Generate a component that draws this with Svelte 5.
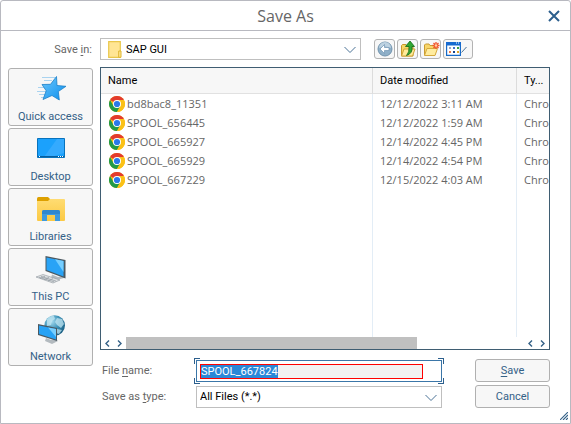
<script>
  import { onMount } from 'svelte';

  const places = ['Quick access', 'Desktop', 'Libraries', 'This PC', 'Network'];
  const files = [
    { name: 'bd8bac8_11351', date: '12/12/2022 3:11 AM', type: 'Chro' },
    { name: 'SPOOL_656445', date: '12/12/2022 1:59 AM', type: 'Chro' },
    { name: 'SPOOL_665927', date: '12/14/2022 4:45 PM', type: 'Chro' },
    { name: 'SPOOL_665929', date: '12/14/2022 4:54 PM', type: 'Chro' },
    { name: 'SPOOL_667229', date: '12/15/2022 4:03 AM', type: 'Chro' }
  ];
  let fileName = $state('SPOOL_667824');
  let field;

  onMount(() => {
    field.focus();
    field.select();
  });
</script>

{#snippet chevron()}
  <svg class="chevron" width="12" height="8" viewBox="0 0 12 8" aria-hidden="true">
    <path d="M.5 1 6 6.500 11.500 1" fill="none" stroke="#4a7396" stroke-width="1" />
  </svg>
{/snippet}

{#snippet angle(d)}
  <svg width="5" height="7" viewBox="0 0 5 7" aria-hidden="true">
    <path {d} fill="none" stroke="#346187" stroke-width="1.4" />
  </svg>
{/snippet}

{#snippet placeIcon(place)}
  {#if place === 'Quick access'}
    <svg width="32" height="32" viewBox="0 0 32 32" aria-hidden="true">
      <defs>
        <linearGradient id="star" x1="0" y1="0" x2="1" y2="1">
          <stop offset="0" stop-color="#6cc6fb" /><stop offset="1" stop-color="#0a8fee" />
        </linearGradient>
      </defs>
      <path d="M7 4.500h13M9 7.500h8M3 14.500h8M2 18.500h9M4 21.500h7M6 24.500h3" stroke="#a9d3f0" stroke-width="1" />
      <path d="M21.500 3.500 22 12.500l9 .8-7.700 5.200 1 8.500-7.300-4.500-9 4 3.200-8.700L7 11.500l8.500-.2z" fill="url(#star)" stroke="#1c7fc6" stroke-width=".8" />
    </svg>
  {:else if place === 'Desktop'}
    <svg width="32" height="32" viewBox="0 0 32 32" aria-hidden="true">
      <path d="M2.500 5.500h27v19h-27z" fill="#1ba1fc" stroke="#0873bd" />
      <path d="M29 6v14L16 24H9L22 6z" fill="#48b3ff" opacity=".55" />
      <path d="M3 23.500h26" stroke="#075e9d" />
      <path d="M4 23.500h1M23 23.500h1M25 23.500h1M27 23.500h1" stroke="#fff" />
    </svg>
  {:else if place === 'Libraries'}
    <svg width="32" height="32" viewBox="0 0 32 32" aria-hidden="true">
      <defs>
        <linearGradient id="lib" x1="0" y1="0" x2="0" y2="1">
          <stop offset="0" stop-color="#ffdc72" /><stop offset="1" stop-color="#fbc944" />
        </linearGradient>
      </defs>
      <path d="M2 5.500q0-1.500 1.500-1.500H13l2 2v4H2z" fill="#dda000" />
      <path d="M15 6h14q1 0 1 1v20q0 1-1 1H3q-1 0-1-1V8h11z" fill="url(#lib)" />
      <path d="M7 28V19q0-2 2-2h14q2 0 2 2v9h-5v-6h-8v6z" fill="#3e9ade" />
      <path d="M9 17h14q2 0 2 2v2H7v-2q0-2 2-2z" fill="#2f87cf" />
    </svg>
  {:else if place === 'This PC'}
    <svg width="32" height="32" viewBox="0 0 32 32" aria-hidden="true">
      <path d="M17 21.500l6 2.500 5-1 1 2-7 2-6-2z" fill="#b3babf" />
      <path d="M10.500 3 30.500 7v18.500L10.500 18z" fill="#4b5961" />
      <path d="M11.500 4.500 28.500 8v15.500L11.500 17z" fill="#29a3f6" />
      <path d="M28.500 8v11L20 6.300z" fill="#75ceff" />
      <path d="M1 24l7-2.500 17 5.500-7 3z" fill="#dfe2e4" stroke="#8d969c" stroke-width=".6" />
      <path d="M4 24.300l15 4.500M6 23.400l15 4.700M5 25.500l5-2.300M9 26.700l5-2.300M13 27.900l5-2.300" stroke="#909aa0" stroke-width=".7" />
    </svg>
  {:else}
    <svg width="32" height="32" viewBox="0 0 32 32" aria-hidden="true">
      <defs>
        <radialGradient id="globe" cx=".35" cy=".3" r=".8">
          <stop offset="0" stop-color="#a7dcf0" /><stop offset=".5" stop-color="#3d92b8" /><stop offset="1" stop-color="#155578" />
        </radialGradient>
      </defs>
      <circle cx="19.700" cy="12.500" r="10.300" fill="url(#globe)" />
      <path d="M12 6q4-4 7-3l1 3-3 2-1 4-4 1zM22 5l5 1 2 5-3 4-4-3-2-3zM22 16l5 1-3 4-3-1z" fill="#c2e6f1" opacity=".75" />
      <path d="M11 25l5 2 5-1 2 2-6 3-7-3z" fill="#b3babf" />
      <path d="M3 11l19 4v13L3 22z" fill="#4b5961" />
      <path d="M4 12.500 21 16v10.500L4 21z" fill="#27a2f5" />
      <path d="M21 16v8l-8-9.600z" fill="#78cfff" />
    </svg>
  {/if}
{/snippet}

<main class="dialog">
  <header>
    <h1>Save As</h1>
    <button class="close" aria-label="Close">
      <svg width="12" height="12" viewBox="0 0 12 12" aria-hidden="true">
        <path d="M1 1l10 10M11 1 1 11" stroke="#2c5f8d" stroke-width="2" />
      </svg>
    </button>
  </header>

  <div class="lookin">
    <label for="folder">Save <u>i</u>n:</label>
    <div class="combo folder">
      <svg class="dir" width="14" height="17" viewBox="0 0 14 17" aria-hidden="true">
        <path d="M.7.7h11.600v15.600H.7z" fill="#ffe594" stroke="#e9c74c" stroke-width="1.2" />
        <path d="M10.700 10h2.300v6.300h-2.300z" fill="#ffe594" stroke="#dfb62f" />
      </svg>
      <select id="folder"><option>SAP GUI</option></select>
      {@render chevron()}
    </div>
    <div class="tools">
      <button aria-label="Back">
        <svg width="18" height="18" viewBox="0 0 18 18" aria-hidden="true">
          <circle cx="9" cy="9" r="7" fill="#8eafc8" stroke="#7193ad" />
          <path d="M3 8a6 6 0 0 1 12 0q-6-3-12 0z" fill="#bdd2e1" />
          <path d="M4 9l4.500-4.500v3H13v3H8.500v3z" fill="#fff" stroke="#6e94b3" stroke-width=".7" />
        </svg>
      </button>
      <button aria-label="Up one level">
        <svg width="18" height="18" viewBox="0 0 18 18" aria-hidden="true">
          <path d="M2.500 16V5.500l1-1H7l1 1.500h6V16z" fill="#f7d565" stroke="#c6982b" />
          <path d="M2.500 16 5 9h11l-2.500 7z" fill="#ffeb99" stroke="#d0a437" />
          <path d="M7.500 15.500q3-3 2.500-9H6.500L11 1l4.500 5.500H13q1 7-5.500 9z" fill="#32a832" stroke="#126a16" stroke-width=".8" />
        </svg>
      </button>
      <button aria-label="Create new folder">
        <svg width="18" height="18" viewBox="0 0 18 18" aria-hidden="true">
          <path d="M2.500 15V5l1-1H7l1 1.500h5V15z" fill="#f8d66a" stroke="#c99b32" />
          <path d="M2.500 15.500 5 8.500h10.500L13 15.500z" fill="#ffec9f" stroke="#d5a93c" />
          <path d="M14 2v7M10.500 5.500h7M11.500 3l5 5M16.500 3l-5 5" stroke="#f1522a" stroke-width="1.3" />
          <circle cx="14" cy="5.500" r="1.300" fill="#ffd0a0" />
        </svg>
      </button>
      <button class="wide" aria-label="View menu">
        <svg width="26" height="18" viewBox="0 0 26 18" aria-hidden="true">
          <path d="M1.600 2.600h13.800v12.800H1.600z" fill="#fff" stroke="#176ac8" stroke-width="1.200" />
          <path d="M1 2h15v3.500H1z" fill="#176ad0" />
          <path d="M11 3h1M13 3h1" stroke="#fff" />
          <path d="M4 7h2v2H4z" fill="#9aa5c2" /><path d="M8 7h2v2H8z" fill="#4571c9" /><path d="M12 7h2v2h-2z" fill="#399d42" />
          <path d="M4 11h2v2H4z" fill="#f17a48" /><path d="M8 11h2v2H8z" fill="#15428c" /><path d="M12 11h2v2h-2z" fill="#e1a326" />
          <path d="M16.500 12.500 21.500 7" fill="none" stroke="#4a7396" />
        </svg>
      </button>
    </div>
  </div>

  <div class="middle">
    <nav aria-label="Places">
      {#each places as place}
        <button>{@render placeIcon(place)}<span>{place}</span></button>
      {/each}
    </nav>

    <div class="content">
      <section class="list" aria-label="Files">
        <table>
          <colgroup><col class="c-name" /><col class="c-date" /><col /></colgroup>
          <thead><tr><th>Name</th><th>Date modified</th><th>Ty...</th></tr></thead>
          <tbody>
            {#each files as file}
              <tr>
                <td>
                  <div class="file">
                    <svg width="16" height="16" viewBox="0 0 16 16" aria-hidden="true">
                      <circle cx="8" cy="8" r="8" fill="#fbc116" />
                      <path d="M8 8 1.070 4A8 8 0 0 1 14.930 4z" fill="#e33b2e" />
                      <path d="M1.070 4A8 8 0 0 0 8 16l3.460-6L8 8 4.540 10z" fill="#229a48" />
                      <path d="M8 4h6.930A8 8 0 0 1 8 16l3.460-6z" fill="#fbc116" />
                      <circle cx="8" cy="8" r="4" fill="#fff" />
                      <circle cx="8" cy="8" r="3.100" fill="#2a79ea" />
                    </svg>
                    <span>{file.name}</span>
                  </div>
                </td>
                <td>{file.date}</td>
                <td>{file.type}</td>
              </tr>
            {/each}
            <tr class="rest"><td></td><td></td><td></td></tr>
          </tbody>
        </table>
        <div class="scroll">
          <div class="arrows">
            {@render angle('M4 .5 1 3.500 4 6.500')}
            {@render angle('M1 .5 4 3.500 1 6.500')}
          </div>
          <div class="track"><div class="thumb"></div></div>
          <div class="arrows">
            {@render angle('M4 .5 1 3.500 4 6.500')}
            {@render angle('M1 .5 4 3.500 1 6.500')}
          </div>
        </div>
      </section>

      <form class="form" onsubmit={(e) => e.preventDefault()}>
        <label for="name">File <u>n</u>ame:</label>
        <div class="namebox">
          <input id="name" type="text" bind:this={field} bind:value={fileName} spellcheck="false" autocomplete="off" />
          <i class="tl"></i><i class="tr"></i><i class="bl"></i><i class="br"></i>
        </div>
        <button class="action" type="submit"><u>S</u>ave</button>
        <label for="type">Save as <u>t</u>ype:</label>
        <div class="combo">
          <select id="type"><option>All Files (*.*)</option></select>
          {@render chevron()}
        </div>
        <button class="action" type="button">Cancel</button>
      </form>
    </div>
  </div>

  <svg class="grip" width="8" height="8" viewBox="0 0 8 8" aria-hidden="true">
    <path d="M0 8 8 0M3 8l5-5M6 8l2-2" stroke="#346187" stroke-width="1.100" />
  </svg>
</main>

<style>
  .dialog {
    box-sizing: border-box;
    position: relative;
    min-height: 100vh;
    border: 1px solid #b8b9c0;
    border-radius: 3px 3px 0 0;
    background: #fff;
    color: #666;
    font: 11px/15px Roboto, "Liberation Sans", sans-serif;
  }
  button, select, input { font: inherit; margin: 0; box-sizing: border-box; }
  svg { display: block; flex: none; }
  u { text-underline-offset: 2px; }

  header {
    display: grid;
    grid-template-columns: 40px 1fr 40px;
    align-items: center;
    height: 29px;
    border-bottom: 1px solid #b8b9c0;
  }
  h1 {
    grid-column: 2;
    margin: 0;
    text-align: center;
    font: 16px/20px "Open Sans", "Noto Sans", sans-serif;
    color: #666;
  }
  .close {
    justify-self: end;
    margin-right: 10px;
    padding: 0;
    border: 0;
    background: none;
  }

  .lookin {
    display: grid;
    grid-template-columns: 92px 1fr auto;
    align-items: center;
    padding: 7px 97px 7px 7px;
  }
  .lookin label { text-align: right; padding-right: 8px; }

  .combo { position: relative; height: 22px; }
  .combo select {
    appearance: none;
    width: 100%;
    height: 22px;
    padding: 0 24px 0 3px;
    border: 1px solid #bfbfbf;
    border-radius: 0;
    background: #fff;
    color: #000;
  }
  .folder select { padding-left: 25px; }
  .dir { position: absolute; left: 8px; top: 3px; }
  .chevron { position: absolute; right: 5px; top: 8px; pointer-events: none; }

  .tools { display: flex; gap: 2px; padding-left: 13px; }
  .tools button {
    display: grid;
    place-items: center;
    width: 21px;
    height: 20px;
    padding: 0;
    border: 1px solid #b3b3b3;
    border-radius: 3px;
    background: #f7f7f7;
  }
  .tools .wide { width: 30px; }

  .middle {
    display: grid;
    grid-template-columns: 85px 1fr;
    gap: 7px;
    padding: 0 20px 0 7px;
  }
  nav { display: flex; flex-direction: column; gap: 2px; padding-top: 1px; }
  nav button {
    display: flex;
    flex-direction: column;
    align-items: center;
    height: 58px;
    padding: 4px 0 0;
    border: 1px solid #b0b0b0;
    border-radius: 3px;
    background: #f7f7f7;
    color: #346187;
  }
  nav span { padding-top: 4px; }

  .content { min-width: 0; }
  .list {
    display: flex;
    flex-direction: column;
    border: 1px solid #3f5d72;
    overflow: hidden;
  }
  table {
    width: 100%;
    height: 269px;
    table-layout: fixed;
    border-collapse: separate;
    border-spacing: 0;
  }
  .c-name { width: 272px; }
  .c-date { width: 144px; }
  th, td {
    padding: 0 0 0 7px;
    border-right: 1px solid #e3edf6;
    text-align: left;
    white-space: nowrap;
    overflow: hidden;
  }
  th {
    height: 25px;
    background: #f7f7f7;
    border-right-color: #dcdcdc;
    border-bottom: 1px solid #e1e1e1;
    color: #000;
    font-weight: 400;
  }
  th:last-child, td:last-child { border-right: 0; }
  td {
    height: 19px;
    font: 11px/19px "Open Sans", "Noto Sans", sans-serif;
  }
  td:first-child { padding-left: 8px; }
  .rest td { height: auto; }
  .file { display: flex; align-items: center; gap: 2px; }

  .scroll { display: flex; height: 12px; align-items: center; }
  .arrows { display: flex; gap: 7px; padding: 0 4px; }
  .track { flex: 1; height: 12px; }
  .thumb { width: 73%; height: 12px; background: #c0c0c0; }

  .form {
    display: grid;
    grid-template-columns: 94px 1fr 75px;
    align-items: center;
    row-gap: 3px;
    padding: 9px 0 0 2px;
  }
  .form .combo, .namebox { margin-right: 33px; }
  .namebox {
    position: relative;
    display: flex;
    height: 22px;
    box-sizing: border-box;
    padding: 3px 18px 2px 3px;
    border: 1px solid #3b76a8;
  }
  .namebox input {
    width: 100%;
    height: 15px;
    padding: 0;
    border: 1px solid #f00;
    border-radius: 0;
    outline: 0;
    background: #f2f2f2;
    color: #000;
    line-height: 13px;
    caret-color: transparent;
  }
  .namebox input::selection { background: #2b88d8; color: #fff; }
  .namebox i { position: absolute; width: 5px; height: 5px; border: 0 solid #2c5f8d; }
  .namebox .tl { left: -3px; top: -3px; border-width: 1px 0 0 1px; }
  .namebox .tr { right: -3px; top: -3px; border-width: 1px 1px 0 0; }
  .namebox .bl { left: -3px; bottom: -3px; border-width: 0 0 1px 1px; }
  .namebox .br { right: -3px; bottom: -3px; border-width: 0 1px 1px 0; }
  .action {
    height: 23px;
    padding: 0;
    border: 1px solid #b0b0b0;
    border-radius: 3px;
    background: #f7f7f7;
    color: #346187;
  }
  .grip { position: absolute; right: 2px; bottom: 3px; }
</style>
